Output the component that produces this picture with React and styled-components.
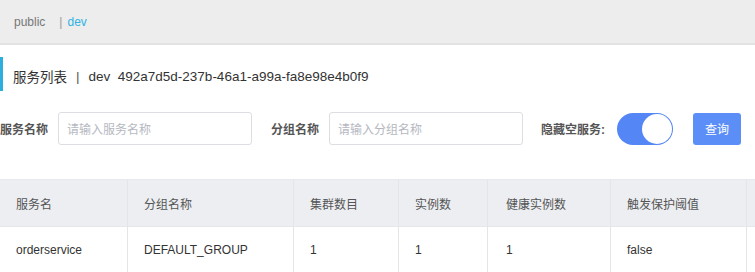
import styled, { createGlobalStyle } from "styled-components";

const Global = createGlobalStyle`
  html, body {
    margin: 0;
    padding: 0;
    background: #fff;
    overflow: hidden;
  }
  body {
    font-family: "Liberation Sans", "Noto Sans CJK SC", sans-serif;
    color: #333;
  }
`;

const Page = styled.div`
  width: 755px;
  height: 272px;
  overflow: hidden;
`;

const NamespaceBar = styled.div`
  height: 43px;
  background: #ededed;
  border-bottom: 2px solid #e3e3e3;
  display: flex;
  align-items: center;
  padding-left: 14px;
  font-size: 12px;
  color: #777;
`;

const Ns = styled.span`
  color: ${(p) => (p.$active ? "#2fb3e3" : "#777")};
`;

const Sep = styled.span`
  color: #999;
  margin: 0 5px 0 14px;
`;

const Title = styled.div`
  margin-top: 12px;
  height: 34px;
  box-sizing: border-box;
  border-left: 3px solid #2eaedc;
  padding: 4px 0 0 10px;
  display: flex;
  align-items: center;
  font-size: 13.5px;
  color: #333;
  white-space: nowrap;
`;

const TitleSep = styled.span`
  margin: 0 9px;
  color: #555;
`;

const FilterRow = styled.div`
  margin-top: 21px;
  height: 33px;
  display: flex;
  align-items: center;
`;

const Label = styled.span`
  font-size: 12px;
  font-weight: 700;
  color: #555;
  margin-left: ${(p) => p.$ml || 0}px;
  margin-right: ${(p) => p.$mr || 10}px;
  white-space: nowrap;
`;

const Input = styled.div`
  box-sizing: border-box;
  width: 194px;
  height: 33px;
  border: 1px solid #dcdee3;
  border-radius: 3px;
  display: flex;
  align-items: center;
  padding-left: 8px;
  font-size: 12px;
  color: #b5b8bf;
`;

const Switch = styled.div`
  box-sizing: border-box;
  width: 56px;
  height: 32px;
  border-radius: 16px;
  background: #5586f6;
  position: relative;
  margin-right: 20px;
  &::after {
    content: "";
    position: absolute;
    right: 1px;
    top: 1px;
    width: 30px;
    height: 30px;
    border-radius: 50%;
    background: #fff;
  }
`;

const Button = styled.div`
  width: 48px;
  height: 32px;
  border-radius: 3px;
  background: #5b8ff7;
  color: #fff;
  font-size: 12px;
  display: flex;
  align-items: center;
  justify-content: center;
`;

const Table = styled.div`
  margin-top: 34px;
  width: 820px;
  display: grid;
  grid-template-columns: 127px 166px 105px 89px 123px 136px 74px;
`;

const Cell = styled.div`
  box-sizing: border-box;
  height: ${(p) => (p.$head ? 48 : 46)}px;
  background: ${(p) => (p.$head ? "#eceef2" : "#fff")};
  border-top: ${(p) => (p.$head ? "1px solid #e8e9ec" : "none")};
  border-bottom: 1px solid #e6e7ea;
  border-left: ${(p) => (p.$first ? "none" : "1px solid #e3e5e8")};
  display: flex;
  align-items: center;
  padding-left: ${(p) => p.$pl || 16}px;
  font-size: 12px;
  color: ${(p) => (p.$head ? "#555" : "#333")};
  white-space: nowrap;
`;

const heads = ["服务名", "分组名称", "集群数目", "实例数", "健康实例数", "触发保护阈值", ""];
const row = ["orderservice", "DEFAULT_GROUP", "1", "1", "1", "false", ""];

export default function App() {
  return (
    <Page>
      <Global />
      <NamespaceBar>
        <Ns>public</Ns>
        <Sep>|</Sep>
        <Ns $active>dev</Ns>
      </NamespaceBar>
      <Title>
        服务列表<TitleSep>|</TitleSep>dev&nbsp;&nbsp;492a7d5d-237b-46a1-a99a-fa8e98e4b0f9
      </Title>
      <FilterRow>
        <Label>服务名称</Label>
        <Input>请输入服务名称</Input>
        <Label $ml={19}>分组名称</Label>
        <Input>请输入分组名称</Input>
        <Label $ml={18} $mr={12}>隐藏空服务:</Label>
        <Switch />
        <Button>查询</Button>
      </FilterRow>
      <Table>
        {heads.map((h, i) => (
          <Cell key={"h" + i} $head $first={i === 0} $pl={i === 4 ? 18 : 16}>
            {h}
          </Cell>
        ))}
        {row.map((c, i) => (
          <Cell key={"r" + i} $first={i === 0} $pl={i === 4 ? 18 : 16}>
            {c}
          </Cell>
        ))}
      </Table>
    </Page>
  );
}
